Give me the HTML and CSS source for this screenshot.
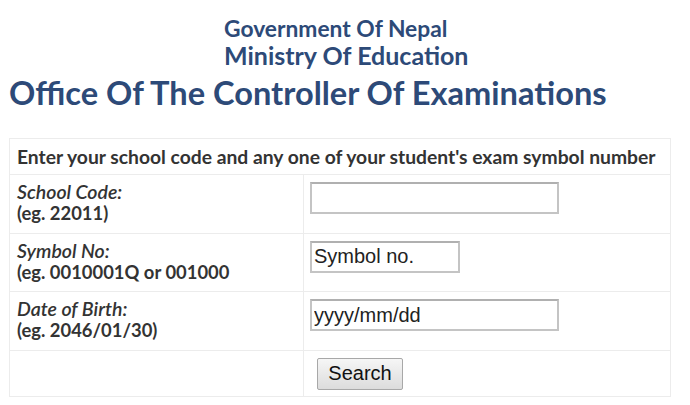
FILE: index.html
```
<!DOCTYPE html>
<html>
<head>
<meta charset="utf-8">
<title>Office Of The Controller Of Examinations</title>
<link rel="stylesheet" href="styles.css">
</head>
<body>
<div class="top">
    <div class="gov">Government Of Nepal<br><span class="min">Ministry Of Education</span></div>
    <div class="office">Office Of The Controller Of Examinations</div>
</div>

<table class="search">
    <tr>
        <td colspan="2" class="intro">Enter your school code and any one of your student's exam symbol number</td>
    </tr>
    <tr>
        <td class="label"><i>School Code:</i><br>(eg. 22011)</td>
        <td class="field"><input type="text" class="wide"></td>
    </tr>
    <tr>
        <td class="label"><i>Symbol No:</i><br>(eg. 0010001Q or 001000</td>
        <td class="field"><input type="text" class="short" value="Symbol no."></td>
    </tr>
    <tr>
        <td class="label"><i>Date of Birth:</i><br>(eg. 2046/01/30)</td>
        <td class="field"><input type="text" class="wide" value="yyyy/mm/dd"></td>
    </tr>
    <tr>
        <td class="last"></td>
        <td class="last field"><button class="go">Search</button></td>
    </tr>
</table>
</body>
</html>
```

FILE: styles.css
```
body {margin:0;padding:0 0 0 9px;background:#ffffff;font-family:Lato,"Open Sans",sans-serif;color:#333333}
div.top {height:138px}
div.gov {padding:15px 0 0 215px;font-size:22.8px;line-height:27px;font-weight:bold;color:#2d4a78}
span.min {font-size:25px}
div.office {margin-top:4px;font-size:32.6px;line-height:38px;font-weight:bold;color:#2d4a78}
table.search {border-collapse:collapse;width:662px;font-size:18.4px}
table.search td {border:1px solid #ececec;vertical-align:top;padding:0}
td.intro {height:35px;padding:0 0 0 7px !important;vertical-align:middle !important;font-weight:bold;font-size:19.3px}
td.label {width:294px;height:58.7px;padding:6px 0 0 7px !important;line-height:21px;font-weight:bold;box-sizing:border-box}
td.label i {font-weight:600;font-size:19.5px}
td.field {padding:7px 0 0 6px !important}
table.search td.last {height:45px;padding:0;vertical-align:middle}
table.search td.last.field {padding:0 0 0 6px !important}
input {font-family:"Liberation Sans",Arial,sans-serif;font-size:20px;color:#222222;border:2px solid #c4c4c4;border-top-color:#b0b0b0;height:32px;box-sizing:border-box;padding:0 2px;margin:0}
input.wide {width:249px}
input.short {width:150px}
button.go {font-family:"Liberation Sans",Arial,sans-serif;font-size:20px;color:#111111;margin:0 0 0 7px;width:86px;height:32px;border:1px solid #a8a8a8;border-radius:2px;background:linear-gradient(#f6f6f6,#dcdcdc);padding:0;display:block}
```
